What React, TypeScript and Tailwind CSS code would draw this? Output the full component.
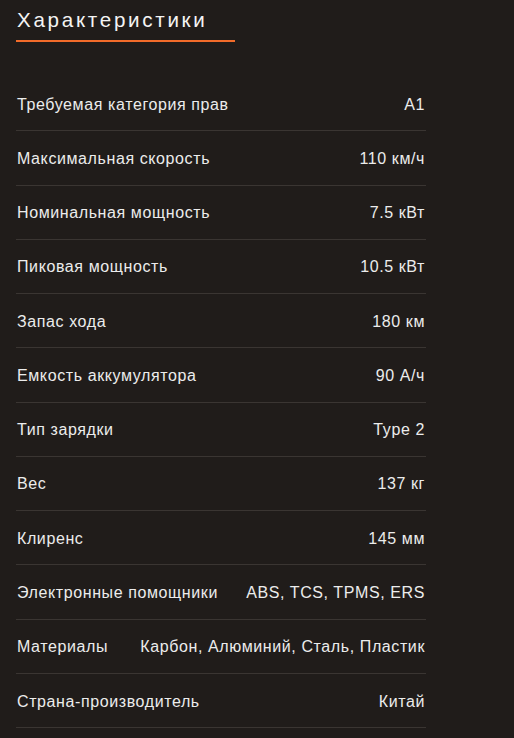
import React from "react";

const rows: [string, string][] = [
  ["Требуемая категория прав", "A1"],
  ["Максимальная скорость", "110 км/ч"],
  ["Номинальная мощность", "7.5 кВт"],
  ["Пиковая мощность", "10.5 кВт"],
  ["Запас хода", "180 км"],
  ["Емкость аккумулятора", "90 А/ч"],
  ["Тип зарядки", "Type 2"],
  ["Вес", "137 кг"],
  ["Клиренс", "145 мм"],
  ["Электронные помощники", "ABS, TCS, TPMS, ERS"],
  ["Материалы", "Карбон, Алюминий, Сталь, Пластик"],
  ["Страна-производитель", "Китай"],
];

export default function App() {
  return (
    <div
      className="min-h-[738px] w-full bg-[#201c1a] text-[#ececec] pl-4 pr-[88px] pt-[6px]"
      style={{ fontFamily: '"Liberation Sans", Arial, sans-serif' }}
    >
      <div className="inline-block">
        <h2 className="text-[20.6px] leading-[28px] tracking-[2.7px] pl-[1px] text-[#f4f4f4]">
          Характеристики
        </h2>
        <div className="mt-[6px] h-[2px] w-[219px] bg-[#f26b2a]" />
      </div>
      <div className="mt-[35px] flex flex-col">
        {rows.map(([k, v]) => (
          <div
            key={k}
            className="flex items-center justify-between gap-4 border-b border-[#3a3532] pt-[16.6px] pb-[15.4px] pl-[1px] pr-[1px] text-[16px] leading-[21.28px] tracking-[0.6px]"
          >
            <span>{k}</span>
            <span className="text-right">{v}</span>
          </div>
        ))}
      </div>
    </div>
  );
}
